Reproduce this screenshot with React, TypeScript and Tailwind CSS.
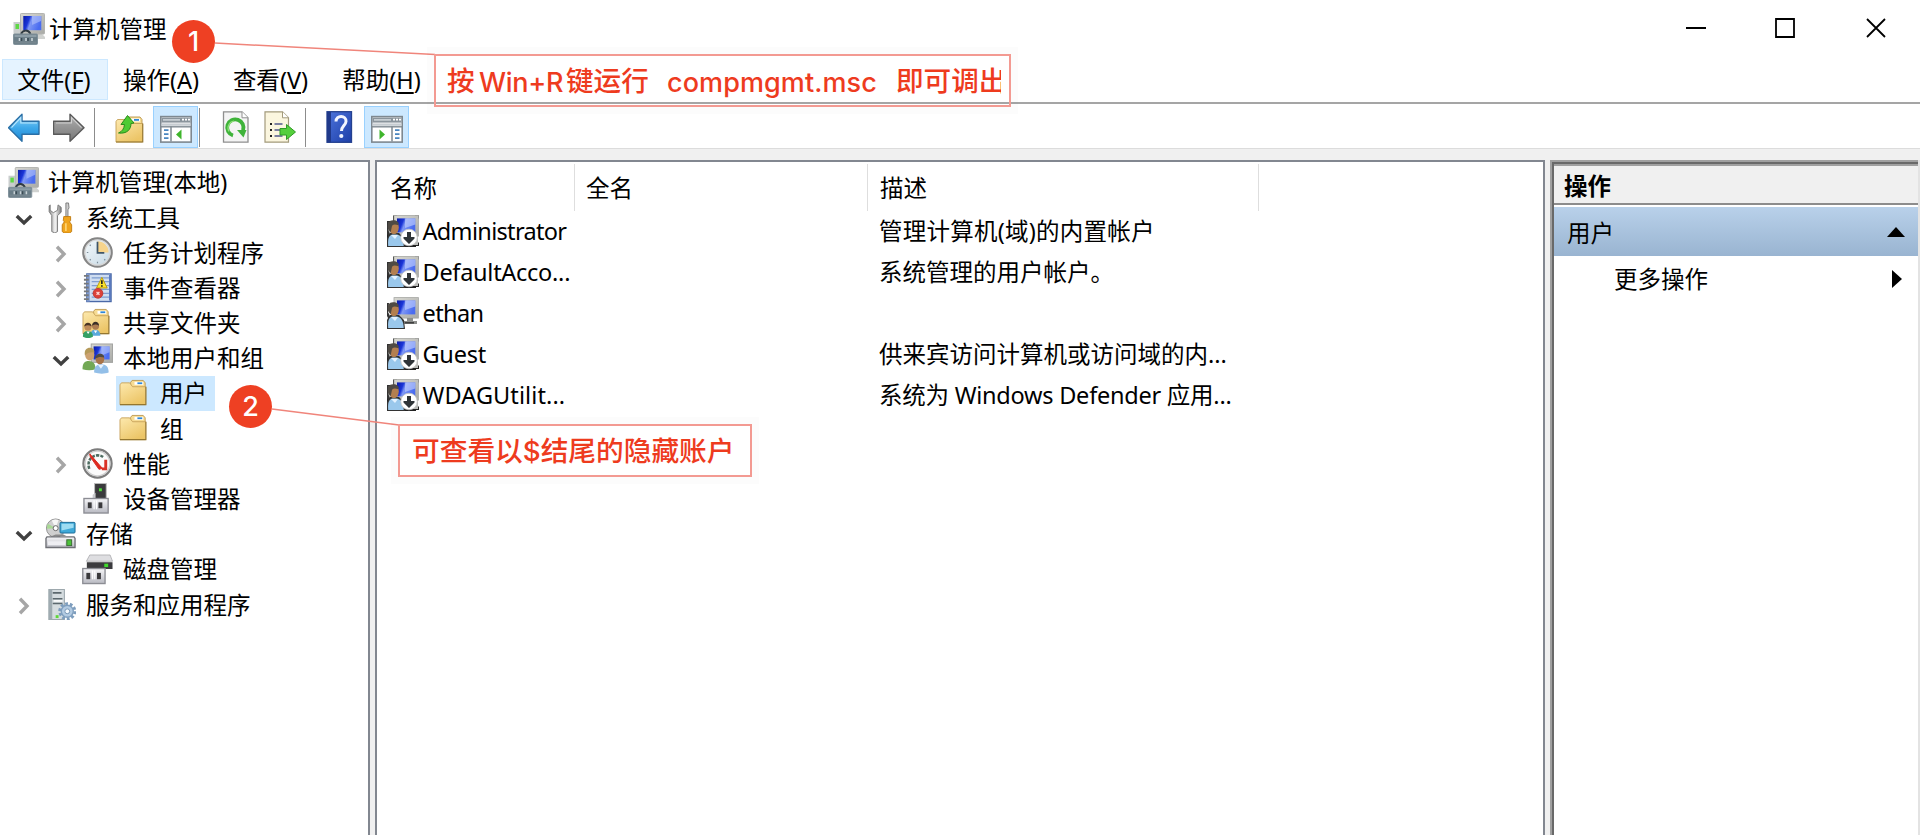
import React from 'react';

const sans = "font-['Noto_Sans','Noto_Sans_CJK_SC',sans-serif]";
const note = "font-['Inter','Noto_Sans_CJK_SC',sans-serif]";

type IconProps = { className?: string };

function Svg({ className = 'h-[31px] w-[31px]', children }: { className?: string; children: React.ReactNode }) {
  return (
    <svg viewBox="0 0 32 32" className={'block shrink-0 ' + className} fill="none">
      {children}
    </svg>
  );
}

function Defs() {
  return (
    <svg className="absolute h-0 w-0">
      <defs>
        <linearGradient id="screen" x1="0" y1="0" x2="1" y2="0.3">
          <stop offset="0" stopColor="#0a1aa8" />
          <stop offset="0.35" stopColor="#1b36d8" />
          <stop offset="0.5" stopColor="#7f98f4" />
          <stop offset="1" stopColor="#4a6cf0" />
        </linearGradient>
        <linearGradient id="frame" x1="0" y1="0" x2="1" y2="1">
          <stop offset="0" stopColor="#d8d8d2" />
          <stop offset="1" stopColor="#a9aaa6" />
        </linearGradient>
        <linearGradient id="folder" x1="0" y1="0" x2="0.6" y2="1">
          <stop offset="0" stopColor="#fde9ae" />
          <stop offset="1" stopColor="#ecc567" />
        </linearGradient>
        <linearGradient id="blueArrow" x1="0" y1="0" x2="0" y2="1">
          <stop offset="0" stopColor="#8fd4f8" />
          <stop offset="0.5" stopColor="#3fa9ea" />
          <stop offset="1" stopColor="#1b86d2" />
        </linearGradient>
        <linearGradient id="grayArrow" x1="0" y1="0" x2="0" y2="1">
          <stop offset="0" stopColor="#b0b0b0" />
          <stop offset="1" stopColor="#777777" />
        </linearGradient>
        <linearGradient id="book" x1="0" y1="0" x2="1" y2="1">
          <stop offset="0" stopColor="#4c74dc" />
          <stop offset="1" stopColor="#1e3fa8" />
        </linearGradient>
        <linearGradient id="steel" x1="0" y1="0" x2="1" y2="0">
          <stop offset="0" stopColor="#8c8c8c" />
          <stop offset="0.5" stopColor="#f4f4f4" />
          <stop offset="1" stopColor="#7d7d7d" />
        </linearGradient>
        <linearGradient id="box" x1="0" y1="0" x2="0" y2="1">
          <stop offset="0" stopColor="#f6f6f8" />
          <stop offset="1" stopColor="#b9bac2" />
        </linearGradient>
        <linearGradient id="dial" x1="0" y1="0" x2="1" y2="1">
          <stop offset="0" stopColor="#f5fafc" />
          <stop offset="1" stopColor="#c6d8e4" />
        </linearGradient>
      </defs>
    </svg>
  );
}

function ComputerIcon({ className }: IconProps) {
  return (
    <Svg className={className}>
      <rect x="0.500" y="9" width="8" height="14" fill="#c9cdcd" />
      <rect x="2.500" y="11" width="3.500" height="5" fill="#5fd845" />
      <path d="M22 20h6l4 4v2h-10z" fill="#d0d2d0" />
      <rect x="7.5" y="0.5" width="24" height="20.5" rx="0.8" fill="url(#frame)" stroke="#b4b5b2" />
      <rect x="10.3" y="3" width="18" height="14.2" fill="url(#screen)" />
      <path d="M19 3h9v5l-9 4z" fill="#b9c8fb" opacity="0.55" />
      <path d="M8 21c2-4 7-5 9.500 0" stroke="#303b42" strokeWidth="2" />
      <rect x="0.5" y="21" width="24" height="10.5" rx="1" fill="#6b7e88" stroke="#81929b" />
      <path d="M1.5 23h22" stroke="#8c9da6" strokeWidth="2.2" />
      <path d="M1.500 29.500h22" stroke="#76868f" strokeWidth="2" />
      <path d="M6.500 25v3M13 25v3M19 25v3" stroke="#c9d2d6" strokeWidth="1.600" />
      <path d="M8.500 25v3M15 25v3" stroke="#3a4a53" strokeWidth="1.500" />
    </Svg>
  );
}

function UserIcon({ disabled }: { disabled: boolean }) {
  return (
    <Svg className="h-[32px] w-[32px]">
      {disabled && <path d="M0 6h6V0.500h4v1h18v-1h4v3h-1v24h1V31h-3v1H2v-2H0z" fill="#222" />}
      {disabled && <path d="M1 7h6V1h24v29H2z" fill="#bcbdba" />}
      <rect x="7" y="0.6" width="24.4" height="20.5" fill="url(#frame)" stroke="#a6a7a4" strokeWidth="0.8" />
      <rect x="10" y="3.4" width="18.3" height="14" fill="url(#screen)" />
      <path d="M18 3.4h10.3v6L18 13z" fill="#c6d4ff" opacity="0.6" />
      {!disabled && <path d="M20 21h6v3h4v3H17v-3h3z" fill="#8c8e8c" />}
      {!disabled && <path d="M18 25.8h9" stroke="#3b3b3b" strokeWidth="1.5" />}
      <path d="M0 32v-9l1-2-1-2V6h2l-1 9 2 4v-1h9l5 5 1 9z" fill="#333" />
      <path d="M1.2 31c-.4-6 0-10 3.800-11.500h5c4.500 1 6.500 5 6.700 11.500z" fill="#9ac8ec" />
      <path d="M4 20l4 4 3-4" fill="#e3f2ff" />
      <ellipse cx="7" cy="12.500" rx="4.800" ry="6.800" fill="#b37f50" />
      <path d="M1 14C0 8 2 5.500 6 5.300c4 0 6.500 2 5.500 5-3-1-5-1-6 0-1 1-1 5-2 7z" fill="#4f4a44" />
      {disabled && (
        <g>
          <circle cx="22" cy="22.500" r="8.300" fill="#fff" stroke="#c4c4c4" strokeWidth="0.800" />
          <path d="M20 17h4v5h3.500v1.500L22 29l-5.500-5.500V22H20z" fill="#2f3438" />
        </g>
      )}
    </Svg>
  );
}

function ToolsIcon() {
  return (
    <Svg>
      <g transform="translate(0.5 0) scale(1.08 1)">
        <path d="M4.500 3v5.500L7.500 11l4-2.500L12 3l3 2.500v5L11.500 14v16.500L9 32l-3-1.500V14L3.500 10V4z" fill="url(#steel)" stroke="#777" strokeWidth="0.900" />
        <path d="M19.500 1h2.500l.5 5-1 2v7h-2V8z" fill="#cfcfcf" stroke="#777" strokeWidth="0.900" />
        <path d="M17.500 15h6.500v4l-1 1.500 2 3v7L23 32h-5l-2-1.500v-7l2-3-1-1.500z" fill="#f0a41c" stroke="#c07a10" strokeWidth="0.900" />
        <path d="M19.500 22v8" stroke="#ffd77a" strokeWidth="1.500" />
      </g>
    </Svg>
  );
}

function ClockIcon() {
  return (
    <Svg>
      <circle cx="16" cy="16" r="14.500" fill="url(#dial)" stroke="#858585" strokeWidth="2.600" />
      <circle cx="16" cy="16" r="13" stroke="#d6d6d6" strokeWidth="1.400" />
      <path d="M16 16V4.500A11.500 11.500 0 0 1 27.500 16z" fill="#f7d48c" />
      <path d="M16 5v11.500h7" stroke="#3f5568" strokeWidth="1.800" />
      <path d="M16 25.500v1.500M5 16h1.500M8 8l1 1M8 24l1-1M23 23l1 1" stroke="#7d8d99" strokeWidth="1.200" />
    </Svg>
  );
}

function EventIcon() {
  return (
    <Svg>
      <rect x="5" y="2" width="25" height="28.500" fill="#cfddf0" stroke="#4a69a8" strokeWidth="1.400" />
      <path d="M5 2h3v28.500H5z" fill="#7f99cc" />
      <path d="M10 6h18M10 10h18M10 14h18M10 18h18M10 22h18M10 26h18" stroke="#7f9dd0" strokeWidth="1.200" />
      <path d="M28.800 3v26.500" stroke="#4468ba" strokeWidth="1.500" />
      <path d="M2 4h5M2 8h5M2 12h5M2 16h5M2 20h5M2 24h5M2 28h5" stroke="#77797c" strokeWidth="2" />
      <path d="M20.500 5.500L26 16.500H15z" fill="#fbe22c" stroke="#b89a10" />
      <path d="M20.500 8.500v4M20.500 13.800v1.500" stroke="#222" strokeWidth="1.700" />
      <circle cx="16.500" cy="22" r="5" fill="#dc4038" stroke="#c0382f" />
      <path d="M15 20.500l3 3m0-3l-3 3" stroke="#ffd9d6" strokeWidth="1.400" />
    </Svg>
  );
}

function FolderShape() {
  return (
    <g>
      <path d="M12 3.500l1.500-2H25l2 2.500v6H12z" fill="#f7dc94" stroke="#b9944a" strokeWidth="0.900" />
      <path d="M16 3h9v3h-9z" fill="#fff" />
      <path d="M19 4.400h5" stroke="#2e87d8" strokeWidth="1.800" />
      <path d="M1 6l1.500-2H11l3 4h13.500v18.500H1z" fill="url(#folder)" stroke="#c5a057" strokeWidth="0.900" />
      <path d="M1 26.500h26.800V8" stroke="#94762f" strokeWidth="1.100" />
    </g>
  );
}

function FolderIcon() {
  return (
    <Svg>
      <g transform="translate(0 1)">
        <FolderShape />
      </g>
    </Svg>
  );
}

function SharedFolderIcon() {
  return (
    <Svg>
      <g transform="translate(0 1)">
        <FolderShape />
      </g>
      <g transform="translate(0.5 4.5) scale(0.9)">
        <path d="M9 28c0-5 2-7 5.500-7s6 2 6 7z" fill="#5aa9dc" />
        <circle cx="15" cy="17" r="4" fill="#ad7c50" />
        <path d="M11 16.500c0-6 8-6 8 0-3-2-5-2-8 0z" fill="#3c3028" />
        <path d="M0.500 29c0-5 2-6.500 5.500-6.500s6 2 6 6.500c-3 2-8 2-11.500 0z" fill="#35a065" />
        <circle cx="6.300" cy="18" r="4.200" fill="#bd8a5a" />
        <path d="M2 17.500c0-6 8.500-6 8.500 0-3-2-5.500-2-8.500 0z" fill="#4a3424" />
        <path d="M4.500 23l2 3 2-3M13 22l2 3 2-3" fill="#fff" />
      </g>
    </Svg>
  );
}

function GroupIcon() {
  return (
    <Svg>
      <rect x="9.500" y="1" width="22" height="19" fill="url(#frame)" stroke="#a2a3a0" />
      <rect x="12" y="3.500" width="16.500" height="13.500" fill="url(#screen)" />
      <path d="M20 3.500h8.500v6L20 13z" fill="#c6d4ff" opacity="0.500" />
      <path d="M0.500 27c0-6 2-8.500 6.500-8.500s7 3 7 8.500c-4 1.500-9 1.500-13.500 0z" fill="#72a855" />
      <ellipse cx="8" cy="12" rx="4.800" ry="6" fill="#cda271" />
      <path d="M3 13c-1-6 2-8 5-8s5 2 4.800 5c-4-1-7 0-9.800 3z" fill="#b59a5a" />
      <path d="M12.500 30.500c0-6 2.500-8.500 7.500-8.500s7.500 3 7.500 8.500c-4 1.500-10 1.500-15 0z" fill="#93bfe8" />
      <path d="M16.500 22.500l3 4 3-4z" fill="#e8f3ff" />
      <ellipse cx="18.500" cy="16.500" rx="4.500" ry="5.500" fill="#a87448" />
      <path d="M13.500 16c0-6 9.500-7 9.500-1-3-1-6-1-9.500 1z" fill="#4d4a44" />
    </Svg>
  );
}

function GaugeIcon() {
  return (
    <Svg>
      <circle cx="16" cy="16" r="14.500" fill="#fbfbfb" stroke="#7c7c7c" strokeWidth="2.400" />
      <circle cx="16" cy="16" r="12.800" stroke="#cfcfcf" strokeWidth="1.400" />
      <path d="M7.500 21.500C5 14 9 8 16 7.500c3 0 5 1 6.500 2.500" stroke="#4d6b60" strokeWidth="2.600" strokeDasharray="3.200 1.200" />
      <path d="M24.500 12v9.500h-4" stroke="#d93226" strokeWidth="3" />
      <path d="M8 6l13 15-3.500 1L8.500 9z" fill="#dd2a20" stroke="#dd2a20" />
    </Svg>
  );
}

function DeviceIcon() {
  return (
    <Svg>
      <rect x="13" y="0.500" width="12" height="16" fill="#3a3a3c" stroke="#bcbcbc" />
      <rect x="17.500" y="5.500" width="3" height="3" fill="#4fe03a" />
      <path d="M11 12l3-2v7h-3z" fill="#c9c9cd" />
      <rect x="2" y="16" width="25" height="15" fill="url(#box)" stroke="#8c8d94" strokeWidth="1.400" />
      <rect x="6" y="20" width="4" height="6" fill="#3a3a3c" />
      <rect x="17" y="20" width="4" height="6" fill="#3a3a3c" />
      <path d="M12.500 18v9M15 18v9" stroke="#fff" strokeWidth="1.200" />
    </Svg>
  );
}

function StorageIcon() {
  return (
    <Svg>
      <circle cx="11" cy="10.500" r="9.500" fill="#cfcfcf" stroke="#8f8f8f" />
      <path d="M11 10.500L3 6a9 9 0 0 0-1 5z" fill="#a8d894" />
      <path d="M11 10.500L7 2.500a9 9 0 0 1 7-.5z" fill="#f6f6f6" />
      <circle cx="11" cy="10.500" r="2.600" fill="#fff" stroke="#666" />
      <rect x="15.500" y="4.500" width="15.500" height="11" rx="1" fill="#3fa9d8" stroke="#1d6c98" />
      <path d="M17 6h12.500v4L17 13z" fill="#9ddcf2" />
      <path d="M2 19.500h28l1 1.500v9.500H1V21z" fill="url(#box)" stroke="#6f7076" strokeWidth="1.400" />
      <path d="M3 24h18v4H3z" fill="#eeeef2" />
      <rect x="22.500" y="22.500" width="5" height="6" fill="#4cc23a" stroke="#3c6b35" />
      <path d="M7 18.500l4-1.500h8l3 1.500z" fill="#8a8a8a" />
    </Svg>
  );
}

function DiskIcon() {
  return (
    <Svg>
      <path d="M8 1h21l2.500 6.500h-27z" fill="#dedee1" stroke="#a8a8ac" strokeWidth="0.800" />
      <rect x="5" y="8.500" width="26.500" height="7" fill="#3b3b3e" />
      <rect x="23" y="10" width="4" height="3.500" fill="#3fdb2c" />
      <rect x="0.800" y="15" width="23" height="15.500" fill="url(#box)" stroke="#8c8d94" strokeWidth="1.400" />
      <rect x="4.500" y="19.500" width="4" height="6.500" fill="#3a3a3c" />
      <rect x="15.500" y="19.500" width="4" height="6.500" fill="#3a3a3c" />
      <path d="M11 17v9M13.200 17v9" stroke="#fff" strokeWidth="1.200" />
    </Svg>
  );
}

function ServiceIcon() {
  return (
    <Svg>
      <path d="M4 0.600h16V31.500H4z" fill="#d5dcdf" stroke="#9da8ad" strokeWidth="1.100" />
      <path d="M4 0.600h3.500V31.500H4z" fill="#9fabb1" />
      <path d="M8 4h9M8 10h10M8 15h10" stroke="#5c686e" strokeWidth="1.600" />
      <path d="M9 12.300h9" stroke="#fff" strokeWidth="1.600" />
      <rect x="11" y="27" width="3" height="3" fill="#5ed838" />
      <circle cx="23" cy="23" r="7.800" stroke="#7d9dbd" strokeWidth="3" strokeDasharray="2.900 2" />
      <circle cx="23" cy="23" r="6.200" fill="#b3cbe2" stroke="#7f9fbf" strokeWidth="1.400" />
      <circle cx="23" cy="23" r="2.500" fill="#f5faff" stroke="#7595b5" />
    </Svg>
  );
}

function BackIcon() {
  return (
    <Svg className="h-[32px] w-[32px]">
      <g transform="translate(0 0.7)">
        <path d="M0.500 16L14 2.500V9.500H31V22.500H14V29.500z" fill="url(#blueArrow)" stroke="#2a6fa6" strokeWidth="1.400" strokeLinejoin="round" />
        <path d="M3.500 16L12.800 6v5.300H29" stroke="#b9e6fc" strokeWidth="1.100" />
      </g>
    </Svg>
  );
}

function ForwardIcon() {
  return (
    <Svg className="h-[32px] w-[32px]">
      <g transform="translate(0 0.7)">
        <path d="M31 16L17 2.500V9.500H0.500V22.500H17V29.500z" fill="url(#grayArrow)" stroke="#5a5a5a" strokeWidth="1.400" strokeLinejoin="round" />
        <path d="M3 11.300h15.500V6l10 10" stroke="#d0d0d0" strokeWidth="1.100" />
      </g>
    </Svg>
  );
}

function UpFolderIcon() {
  return (
    <Svg className="h-[32px] w-[32px]">
      <g transform="translate(1 4.5)">
        <FolderShape />
      </g>
      <path d="M4.500 22c3.500-1.500 5.500-4 6-8.500H7L13.500 4.500l6.500 7.500-3 .5c0 6-4 10.500-12.500 9.500z" fill="#4ecb33" stroke="#2a8c1c" strokeLinejoin="round" />
    </Svg>
  );
}

function PaneIcon({ flip }: { flip: boolean }) {
  return (
    <Svg className="h-[32px] w-[32px]">
      <g transform="translate(0 1.6)">
        <rect x="0.800" y="4" width="30.400" height="25.500" fill="#fff" stroke="#7e8890" strokeWidth="1.600" />
        <path d="M1.500 5h29v5h-29z" fill="#8a949c" />
        <path d="M3 7.300h17" stroke="#d7dde1" strokeWidth="1.400" />
        <path d="M22 7h2M25 7h2M28 7h2" stroke="#fff" strokeWidth="1.800" />
        <path d="M1.500 12h29" stroke="#c6ccd1" strokeWidth="2.400" />
        <path d="M1 14.200h30" stroke="#7e8890" strokeWidth="1.400" />
        {flip ? (
          <g>
            <path d="M21 14v15" stroke="#7e8890" strokeWidth="1.500" />
            <path d="M24 17.500h4.500M24 21.500h4.500M24 25.500h4.500" stroke="#4a86c0" strokeWidth="1.700" />
            <path d="M8.500 17v10l5.500-5z" fill="#3fb52c" />
          </g>
        ) : (
          <g>
            <path d="M11 14v15" stroke="#7e8890" strokeWidth="1.500" />
            <path d="M4 17.500h4.500M4 21.500h4.500M4 25.500h4.500" stroke="#4a86c0" strokeWidth="1.700" />
            <path d="M21.500 17v10L16 22z" fill="#3fb52c" />
          </g>
        )}
      </g>
    </Svg>
  );
}

function RefreshIcon() {
  return (
    <Svg className="h-[32px] w-[32px]">
      <path d="M3.500 0.800h18.500l6 6v24.400H3.500z" fill="#f4f4f4" stroke="#8f8f8f" strokeWidth="1.300" />
      <path d="M22 0.800v6h6" fill="#fff" stroke="#8f8f8f" />
      <path d="M13 24.500a8.200 8.200 0 1 1 10-5" stroke="#3fb33a" strokeWidth="3.800" />
      <path d="M17 19h9.500l-3 7.500z" fill="#3fb33a" />
      <path d="M9 20.500a7 7 0 0 1 5-10.500" stroke="#8fe07a" strokeWidth="1.200" />
    </Svg>
  );
}

function ExportIcon() {
  return (
    <Svg className="h-[32px] w-[32px]">
      <path d="M1 0.800h17.500l6 6v24.400H1z" fill="#fbf6df" stroke="#a39a7c" strokeWidth="1.200" />
      <path d="M18.500 0.800v6h6" fill="#fff" stroke="#a39a7c" />
      <path d="M6 13h2M6 19h2M6 25h2" stroke="#222" strokeWidth="2" />
      <path d="M10.500 13h8M10.500 19h6M10.500 25h8" stroke="#51588c" strokeWidth="1.500" />
      <path d="M16 17.500h6.500V13.500L31.500 21l-9 7.500v-4.500H16z" fill="#55cf3c" stroke="#2f9a25" strokeLinejoin="round" />
    </Svg>
  );
}

function HelpIcon() {
  return (
    <Svg className="h-[32px] w-[32px]">
      <rect x="4" y="0.700" width="24.500" height="30.600" fill="url(#book)" stroke="#24418f" strokeWidth="1.300" />
      <path d="M4 1h4v30.300H4z" fill="#20398a" />
      <path d="M13 10.500C13 3.500 23.500 4 23 10.500c-.3 4-4.500 4.500-4.500 9.500" stroke="#f2f5ff" strokeWidth="3" />
      <circle cx="18.300" cy="25" r="2.100" fill="#f2f5ff" />
    </Svg>
  );
}

function Chevron({ open }: { open: boolean }) {
  return open ? (
    <svg viewBox="0 0 18 12" className="mt-[5px] h-[12px] w-[18px]" fill="none">
      <path d="M1.800 2l7.200 7 7.200-7" stroke="#404040" strokeWidth="3.400" />
    </svg>
  ) : (
    <svg viewBox="0 0 12 18" className="mt-[3px] h-[18px] w-[12px]" fill="none">
      <path d="M2 1.800L9 9l-7 7.200" stroke="#a6a6a6" strokeWidth="3.400" />
    </svg>
  );
}

type TreeItem = {
  label: string;
  icon: React.ReactNode;
  pad: string;
  chevron?: 'open' | 'closed';
  selected?: boolean;
};

const level1 = 'pl-[8px]';
const level2 = 'pl-[45px]';
const level3 = 'pl-[82px]';

const tree: TreeItem[] = [
  { label: '系统工具', icon: <ToolsIcon />, pad: level1, chevron: 'open' },
  { label: '任务计划程序', icon: <ClockIcon />, pad: level2, chevron: 'closed' },
  { label: '事件查看器', icon: <EventIcon />, pad: level2, chevron: 'closed' },
  { label: '共享文件夹', icon: <SharedFolderIcon />, pad: level2, chevron: 'closed' },
  { label: '本地用户和组', icon: <GroupIcon />, pad: level2, chevron: 'open' },
  { label: '用户', icon: <FolderIcon />, pad: level3, selected: true },
  { label: '组', icon: <FolderIcon />, pad: level3 },
  { label: '性能', icon: <GaugeIcon />, pad: level2, chevron: 'closed' },
  { label: '设备管理器', icon: <DeviceIcon />, pad: level2 },
  { label: '存储', icon: <StorageIcon />, pad: level1, chevron: 'open' },
  { label: '磁盘管理', icon: <DiskIcon />, pad: level2 },
  { label: '服务和应用程序', icon: <ServiceIcon />, pad: level1, chevron: 'closed' },
];

function TreeRow({ item }: { item: TreeItem }) {
  return (
    <div className={'flex h-[35.2px] items-center ' + item.pad}>
      <div className="flex w-[33.500px] shrink-0 items-center justify-center pr-[2px]">
        {item.chevron && <Chevron open={item.chevron === 'open'} />}
      </div>
      <div className={'flex h-full items-center pr-[8px] pl-[3.500px] ' + (item.selected ? 'bg-[#cce8ff]' : '')}>
        {item.icon}
        <span className="ml-[10px] pt-[2px] whitespace-nowrap">{item.label}</span>
      </div>
    </div>
  );
}

const users = [
  { name: 'Administrator', desc: '管理计算机(域)的内置帐户', disabled: true, nameGap: 'tracking-[-0.68px]', descGap: 'tracking-[0.25px]' },
  { name: 'DefaultAcco...', desc: '系统管理的用户帐户。', disabled: true, nameGap: 'tracking-[-0.27px]', descGap: '' },
  { name: 'ethan', desc: '', disabled: false, nameGap: 'tracking-[-0.6px]', descGap: '' },
  { name: 'Guest', desc: '供来宾访问计算机或访问域的内...', disabled: true, nameGap: 'tracking-[-0.25px]', descGap: '' },
  { name: 'WDAGUtilit...', desc: '系统为 Windows Defender 应用...', disabled: true, nameGap: 'tracking-[0.1px]', descGap: 'tracking-[-0.24px]' },
];

const menus = [
  { text: '文件', key: 'F', box: 'w-[106px] pr-[2px] border-[#cce8ff] bg-[#e5f3ff]' },
  { text: '操作', key: 'A', box: 'w-[107px] pr-[1px] border-transparent' },
  { text: '查看', key: 'V', box: 'w-[112px] pr-[1px] border-transparent' },
  { text: '帮助', key: 'H', box: 'w-[109px] border-transparent' },
];

function ToolButton({ children }: { children: React.ReactNode }) {
  return (
    <div className="flex h-[42px] w-[45px] items-center justify-center border border-[#99d1ff] bg-[#cce8ff]">
      {children}
    </div>
  );
}

function Separator({ className }: { className: string }) {
  return <div className={'h-[39px] w-px bg-[#8c8c8c] ' + className} />;
}

export default function App() {
  return (
    <div className={'relative flex h-[835px] w-[1920px] flex-col overflow-hidden bg-white text-[23.500px] leading-none text-black ' + sans}>
      <Defs />
      <header className="flex h-[59px] shrink-0 justify-between">
        <div className="flex h-[57px] items-center pl-[13px]">
          <ComputerIcon className="h-[32px] w-[32px]" />
          <span className="ml-[4px] pt-[2px]">计算机管理</span>
        </div>
        <div className="flex h-[55px] items-center">
          <svg viewBox="0 0 20 20" className="h-[20px] w-[20px]" stroke="#000" strokeWidth="2">
            <path d="M0 10h20" />
          </svg>
          <svg viewBox="0 0 20 20" className="ml-[69px] h-[20px] w-[20px]" stroke="#000" strokeWidth="1.800" fill="none">
            <path d="M1 1h18v18H1z" />
          </svg>
          <svg viewBox="0 0 20 20" className="mr-[34px] ml-[71px] h-[20px] w-[20px]" stroke="#000" strokeWidth="1.800">
            <path d="M1 1l18 18M19 1L1 19" />
          </svg>
        </div>
      </header>

      <nav className="flex h-[43px] shrink-0 pl-[2px]">
        {menus.map((m) => (
          <div key={m.key} className={'flex h-[41px] items-center justify-center border pt-[2px] whitespace-nowrap ' + m.box}>
            <span>
              {m.text}(<span className="underline decoration-[1.5px] underline-offset-[3px]">{m.key}</span>)
            </span>
          </div>
        ))}
      </nav>

      <div className="flex h-[47px] shrink-0 items-center border-t-2 border-b border-t-[#a5a5a5] border-b-[#dcdcdc] pt-[2px] pl-[8px]">
        <BackIcon />
        <div className="w-[13px]" />
        <ForwardIcon />
        <Separator className="ml-[9px]" />
        <div className="ml-[19px]">
          <UpFolderIcon />
        </div>
        <div className="ml-[7px]">
          <ToolButton>
            <PaneIcon flip={false} />
          </ToolButton>
        </div>
        <Separator className="ml-[1px]" />
        <div className="ml-[20px]">
          <RefreshIcon />
        </div>
        <div className="ml-[12px]">
          <ExportIcon />
        </div>
        <Separator className="ml-[9px]" />
        <div className="ml-[17px]">
          <HelpIcon />
        </div>
        <div className="ml-[9px]">
          <ToolButton>
            <PaneIcon flip />
          </ToolButton>
        </div>
      </div>

      <main className="flex min-h-0 flex-1 bg-[#f0f0f0] pt-[11px]">
        <aside className="w-[370px] shrink-0 border-t-2 border-r-2 border-[#828790] bg-white pt-[2.500px]">
          <div className="flex h-[35.2px] items-center pl-[8px]">
            <ComputerIcon />
            <span className="ml-[9px] pt-[2px] tracking-[0.1px]">计算机管理(本地)</span>
          </div>
          {tree.map((item) => (
            <TreeRow key={item.label} item={item} />
          ))}
        </aside>

        <section className="ml-[5px] w-[1170px] shrink-0 border-x-2 border-t-2 border-[#828790] bg-white">
          <div className="flex h-[48px] items-start pt-[2px]">
            <div className="flex h-[47px] w-[198px] items-center border-r border-[#dedede] pt-[3px] pl-[13px]">名称</div>
            <div className="flex h-[47px] w-[293px] items-center border-r border-[#dedede] pt-[3px] pl-[11px]">全名</div>
            <div className="flex h-[47px] w-[391px] items-center border-r border-[#dedede] pt-[3px] pl-[12px]">描述</div>
          </div>
          {users.map((u) => (
            <div key={u.name} className="flex h-[41.1px] items-center pl-[10px]">
              <UserIcon disabled={u.disabled} />
              <span className={'ml-[3.500px] w-[456.500px] pt-[2px] whitespace-nowrap ' + u.nameGap}>{u.name}</span>
              <span className={'pt-[2px] whitespace-nowrap ' + u.descGap}>{u.desc}</span>
            </div>
          ))}
        </section>

        <aside className="ml-[5px] w-[368px] shrink-0 border-t-2 border-l-2 border-[#a0a0a0] bg-white">
          <div className="h-full border-t-2 border-l-2 border-[#696969]">
            <div className="flex h-[41px] items-center border-t-2 border-b-2 border-t-[#a0a0a0] border-b-[#8c8c8c] bg-[#f0f0f0] pt-[4px] pl-[10px] font-bold">
              操作
            </div>
            <div className="mt-[2px] flex h-[49px] items-center justify-between bg-gradient-to-b from-[#b9d1ea] to-[#99b4d1] pr-[13px] pl-[13px]">
              <span className="pt-[4px]">用户</span>
              <svg viewBox="0 0 18 10" className="h-[10px] w-[18px]">
                <path d="M0 10L9 0l9 10z" />
              </svg>
            </div>
            <div className="flex h-[45px] items-center justify-between pr-[16px] pl-[60px]">
              <span className="pt-[3px]">更多操作</span>
              <svg viewBox="0 0 10 18" className="h-[18px] w-[10px]">
                <path d="M0 0l10 9-10 9z" />
              </svg>
            </div>
          </div>
        </aside>
        <div className="w-[2px] bg-[#e3e3e3]" />
      </main>

      <svg viewBox="0 0 1920 835" className="pointer-events-none absolute inset-0 h-[835px] w-[1920px]" fill="none" stroke="#f0857b" strokeWidth="1.500">
        <path d="M215 43L435 54.500" />
        <path d="M272 409L399 425" />
      </svg>

      <div className={'absolute top-[20px] left-[172px] flex h-[43px] w-[43px] items-center justify-center rounded-full bg-[#ee4023] text-[27px] font-medium text-white ' + note}>
        1
      </div>
      <div className={'absolute top-[385px] left-[229px] flex h-[43px] w-[43px] items-center justify-center rounded-full bg-[#ee4023] text-[27px] font-medium text-white ' + note}>
        2
      </div>

      <div className={'absolute top-[54px] left-[434px] h-[53px] w-[577px] border-2 border-[#f39a92] text-[27.600px] font-medium text-[#ee3b1e] shadow-[0_0_0_7px_rgba(0,0,0,0.012)] ' + note}>
        <div className="flex h-full w-[565px] items-center overflow-hidden pt-[3px] pl-[11px] whitespace-pre">
          <span className="w-[32px] shrink-0">按</span>
          <span className="w-[87px] shrink-0 text-[27px] tracking-[-0.3px]">Win+R</span>
          <span className="w-[101px] shrink-0">键运行</span>
          <span className="w-[229px] shrink-0 text-[27px] tracking-[0.1px]">compmgmt.msc</span>
          <span className="shrink-0">即可调出</span>
        </div>
      </div>

      <div className={'absolute top-[424px] left-[398px] flex h-[53px] w-[354px] items-center border-2 border-[#f39a92] pt-[3px] pl-[12px] text-[27.700px] font-medium whitespace-nowrap text-[#ee3b1e] shadow-[0_0_0_7px_rgba(0,0,0,0.012)] ' + note}>
        可查看以$结尾的隐藏账户
      </div>
    </div>
  );
}
